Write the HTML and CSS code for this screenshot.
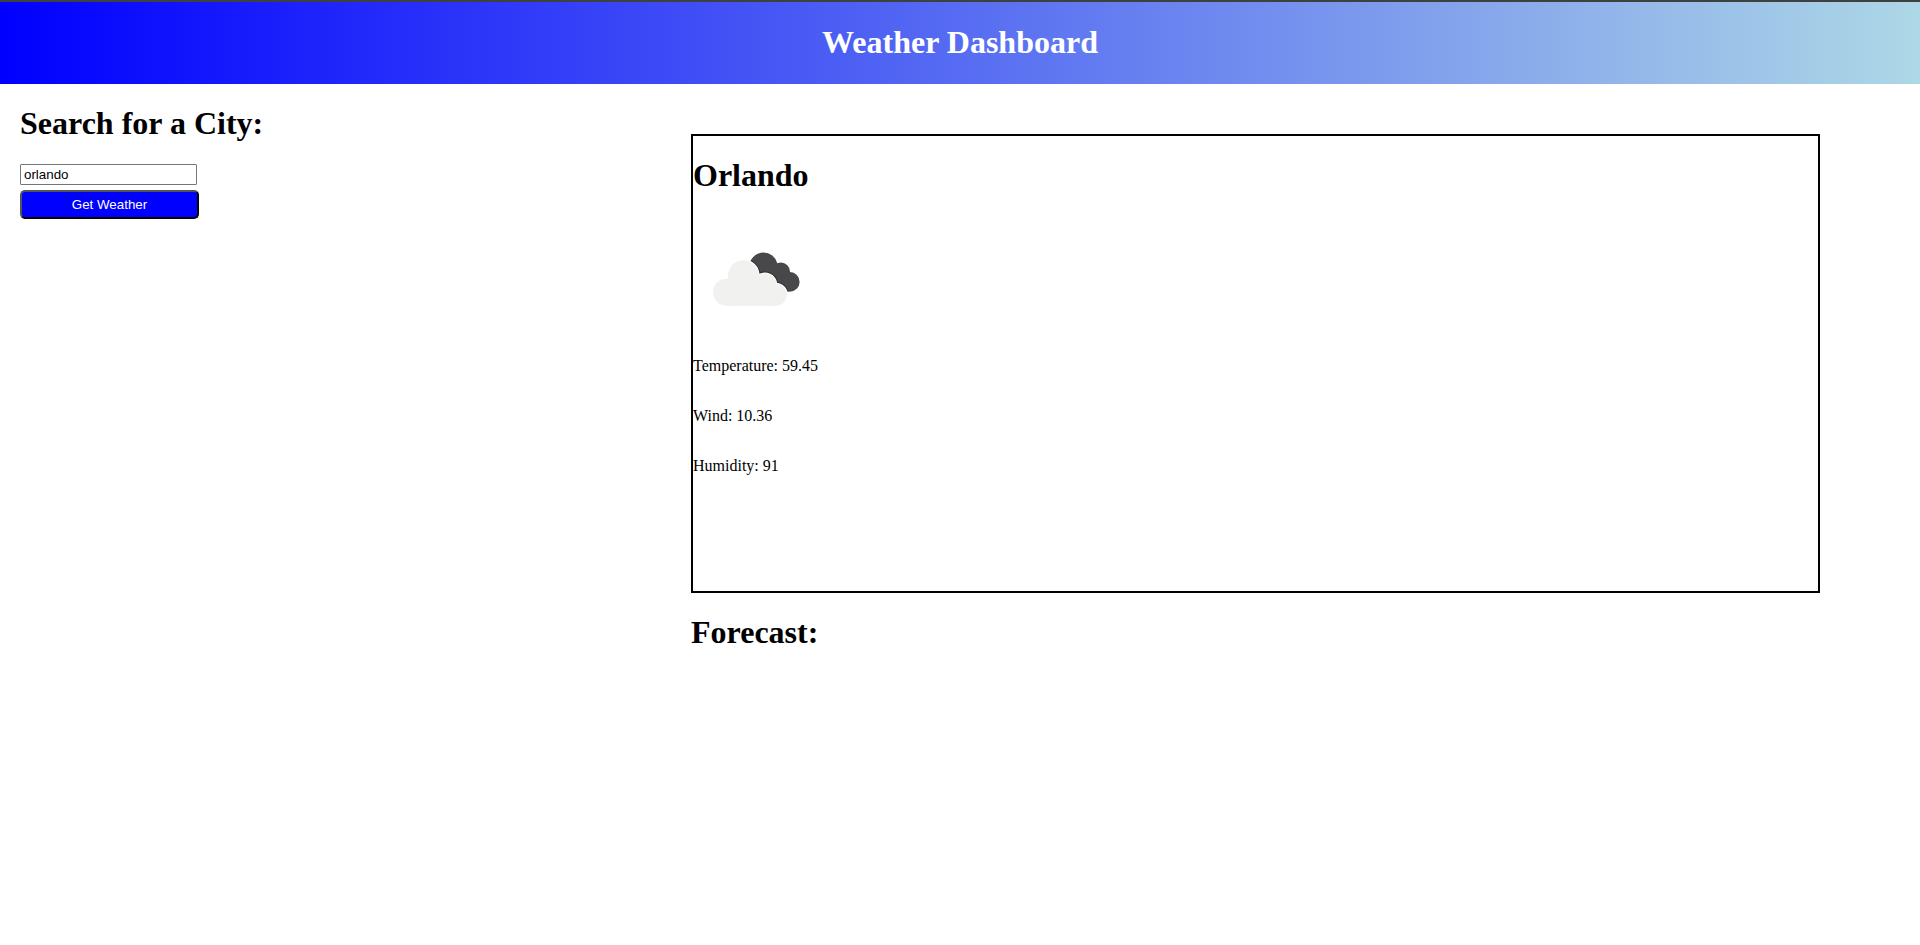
FILE: index.html
```html
<!DOCTYPE html>
<html lang="en">
<head>
<meta charset="utf-8">
<title>Weather Dashboard</title>
<link rel="stylesheet" href="styles.css">
</head>
<body>
<header class="header"><h1>Weather Dashboard</h1></header>
<main class="main">
  <section class="search">
    <h1>Search for a City:</h1>
    <input class="city" type="text" value="orlando">
    <button class="submit" type="button">Get Weather</button>
  </section>
  <section class="results">
    <div class="current">
      <h1>Orlando</h1>
      <svg class="icon" width="100" height="100" viewBox="0 0 100 100">
        <defs>
          <g id="cloud">
            <circle cx="33.5" cy="62.3" r="13.5"/>
            <circle cx="50.3" cy="45.6" r="15.3"/>
            <circle cx="72" cy="54.7" r="11.2"/>
            <circle cx="82.8" cy="64.8" r="11"/>
            <rect x="33" y="62" width="50" height="13.8"/>
            <rect x="40" y="50" width="34" height="20"/>
          </g>
          <clipPath id="back">
            <circle cx="70.5" cy="36.7" r="14.2"/>
            <circle cx="88" cy="41.5" r="9"/>
            <circle cx="96.8" cy="51.9" r="9.8"/>
            <path d="M62 40H88L96 61H84Z"/>
          </clipPath>
        </defs>
        <g clip-path="url(#back)">
          <rect x="50" y="20" width="60" height="50" fill="#48484a"/>
          <use href="#cloud" fill="#2e2e30" stroke="#2e2e30" stroke-width="4"/>
        </g>
        <use href="#cloud" fill="#fff" stroke="#fff" stroke-width="2"/>
        <use href="#cloud" fill="#f1f1ef"/>
      </svg>
      <p>Temperature: 59.45</p>
      <p>Wind: 10.36</p>
      <p>Humidity: 91</p>
    </div>
    <h1>Forecast:</h1>
  </section>
</main>
</body>
</html>
```
FILE: styles.css
```css
body {
  margin: 0;
  font-family: "Liberation Serif", "Times New Roman", serif;
  font-size: 16px;
  color: #000;
  background: #fff;
}
h1 {
  margin: 21.44px 0;
  font-size: 32px;
  line-height: 37px;
}
.header {
  box-sizing: border-box;
  height: 84px;
  display: flow-root;
  border-top: 2px solid #404040;
  background: linear-gradient(to right, blue, lightblue) border-box;
  color: #fff;
  text-align: center;
}
.header h1 {
  margin-top: 22.44px;
}
.main {
  display: flex;
}
.search {
  width: 671px;
  padding-left: 20px;
}
.city, .submit {
  display: block;
  box-sizing: border-box;
  font: 13.333px "Liberation Sans", Arial, sans-serif;
}
.city {
  width: 177px;
  height: 21px;
  margin: 0;
  padding: 1px 3px;
  border: 1px solid #767676;
  border-radius: 1px;
  background: #fff;
  color: #000;
}
.submit {
  width: 179px;
  height: 29px;
  margin: 5px 0 0;
  padding: 0;
  border: 2px outset #000;
  border-radius: 5px;
  background: blue;
  color: #fff;
}
.results {
  width: 1129px;
  padding-top: 50px;
}
.current {
  box-sizing: border-box;
  display: flow-root;
  height: 459px;
  border: 2px solid #000;
}
.icon {
  display: block;
  overflow: visible;
  margin-top: 35.5px;
}
.current p {
  margin: 32px 0;
  line-height: 18px;
}
.icon + p {
  margin-top: 27px;
}
```
